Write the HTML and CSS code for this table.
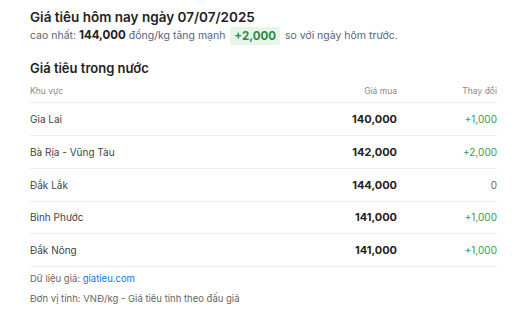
FILE: index.html
```html
<!DOCTYPE html>
<html lang="vi">
<head>
<meta charset="utf-8">
<link rel="stylesheet" href="styles.css">
</head>
<body>
<div class="wrap">
  <h1 class="title">Giá tiêu hôm nay ngày 07/07/2025</h1>
  <p class="sub">cao nhất: <b class="hi">144,000</b> đồng/kg tăng mạnh <span class="badge">+2,000</span> so với ngày hôm trước.</p>
  <h2 class="section">Giá tiêu trong nước</h2>
  <table class="tbl">
    <thead>
      <tr><th class="c-reg">Khu vực</th><th class="c-price">Giá mua</th><th class="c-chg">Thay đổi</th></tr>
    </thead>
    <tbody>
      <tr><td class="c-reg">Gia Lai</td><td class="c-price">140,000</td><td class="c-chg up">+1,000</td></tr>
      <tr><td class="c-reg">Bà Rịa - Vũng Tàu</td><td class="c-price">142,000</td><td class="c-chg up">+2,000</td></tr>
      <tr><td class="c-reg">Đắk Lắk</td><td class="c-price">144,000</td><td class="c-chg">0</td></tr>
      <tr><td class="c-reg">Bình Phước</td><td class="c-price">141,000</td><td class="c-chg up">+1,000</td></tr>
      <tr><td class="c-reg">Đắk Nông</td><td class="c-price">141,000</td><td class="c-chg up">+1,000</td></tr>
    </tbody>
  </table>
  <p class="note">Dữ liệu giá: <a class="link" href="#">giatieu.com</a></p>
  <p class="note">Đơn vị tính: VNĐ/kg - Giá tiêu tính theo đấu giá</p>
</div>
</body>
</html>
```
FILE: styles.css
```css
html, body { margin: 0; padding: 0; background: #fff; }
body { font-family: Inter, "Noto Sans", sans-serif; color: #222; }
.wrap { padding: 8px 28px 0 30px; }
.title { margin: 0; font-size: 13.5px; font-weight: 600; line-height: 18px; color: #222; }
.sub { margin: 0; font-size: 10.5px; line-height: 18px; color: #5a6478; }
.hi { font-weight: 700; color: #222; font-size: 11.5px; }
.badge { display: inline-block; background: #e8f5e9; color: #2e8b3e; font-weight: 700; font-size: 11.5px; padding: 0 4px; border-radius: 3px; line-height: 18px; margin: 0 2px; vertical-align: middle; }
.section { margin: 14px 0 0; font-size: 13px; font-weight: 600; line-height: 18px; color: #222; }
.tbl { width: 100%; border-collapse: collapse; margin-top: 2px; }
.tbl th { font-weight: 400; font-size: 8.5px; color: #888; height: 23px; border-bottom: 1px solid #eceef1; padding: 0; }
.tbl td { height: 31.8px; border-bottom: 1px solid #eceef1; padding: 0; font-size: 10px; }
.c-reg { text-align: left; color: #444; }
.c-price { text-align: right; width: 180px; }
td.c-price { font-weight: 700; font-size: 11px; color: #222; }
.c-chg { text-align: right; width: 100px; color: #666; }
.up { color: #3a9a4a; }
.note { margin: 4px 0 0; font-size: 9.5px; line-height: 16px; color: #666; }
.note + .note { margin-top: 4px; }
.link { color: #1a73e8; text-decoration: none; }
```
